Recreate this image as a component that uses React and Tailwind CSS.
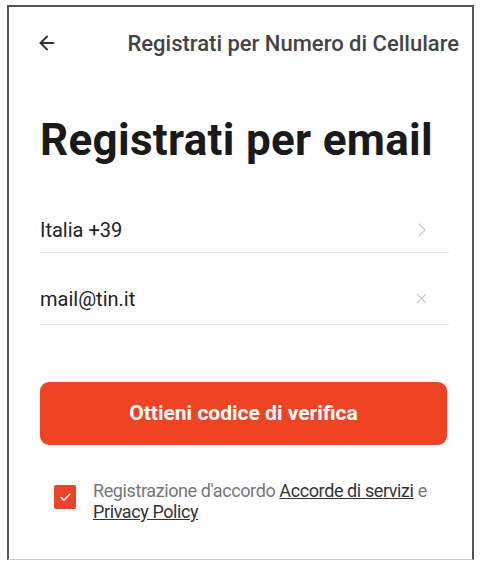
import React from 'react';
import { ArrowLeft, ChevronRight, X, Check } from 'lucide-react';

const App = () => {
  return (
    <div className="w-[481px] h-[562px] bg-white pt-[5px] px-[7px] overflow-hidden" style={{ fontFamily: 'Roboto, "Liberation Sans", sans-serif' }}>
      <div className="h-[555px] border-t-2 border-x-2 border-b border-t-[#555] border-x-[#555] border-b-[#ccc] flex flex-col pl-[27px] pr-[23px]">
        {/* Header */}
        <div className="flex items-center justify-between h-[44px] mt-[14px] -mr-[10px]">
          <ArrowLeft className="w-[22px] h-[22px] text-[#333]" strokeWidth={2.2} />
          <span className="text-[22px] font-medium text-[#444]">Registrati per Numero di Cellulare</span>
        </div>

        {/* Titolo */}
        <h1 className="mt-[49px] pl-[4px] text-[44px] leading-[52px] font-bold text-[#1a1a1a] tracking-[0.3px]">Registrati per email</h1>

        {/* Campi */}
        <div className="mt-[41px] pl-[4px]">
          <div className="flex items-center justify-between h-[46px] border-b border-[#e8e8e8]">
            <span className="text-[20px] text-[#222]">Italia +39</span>
            <ChevronRight className="w-[24px] h-[24px] text-[#ccc] mr-[15px]" strokeWidth={1.3} />
          </div>
          <div className="flex items-center justify-between h-[72px] pt-[20px] border-b border-[#e8e8e8]">
            <span className="text-[20px] text-[#222]">mail@tin.it</span>
            <X className="w-[17px] h-[17px] text-[#ccc] mr-[19px]" strokeWidth={1.5} />
          </div>
        </div>

        {/* Pulsante */}
        <button type="button" className="mt-[57px] ml-[4px] mr-[2px] h-[63px] rounded-[9px] bg-[#ee4424] text-white text-[21px] font-bold flex items-center justify-center">
          Ottieni codice di verifica
        </button>

        {/* Accordo */}
        <div className="mt-[35px] ml-[18px] flex items-start gap-[17px]">
          <div className="mt-[5px] w-[22px] h-[24px] rounded-[2px] bg-[#e8442a] flex items-center justify-center shrink-0">
            <Check className="w-[13px] h-[13px] text-white" strokeWidth={3} />
          </div>
          <p className="text-[18px] leading-[21px] text-[#777] tracking-[-0.4px]">
            Registrazione d'accordo <span className="text-[#333] underline">Accorde di servizi</span> e
            <br />
            <span className="text-[#333] underline">Privacy Policy</span>
          </p>
        </div>
      </div>
    </div>
  );
};

export default App;
